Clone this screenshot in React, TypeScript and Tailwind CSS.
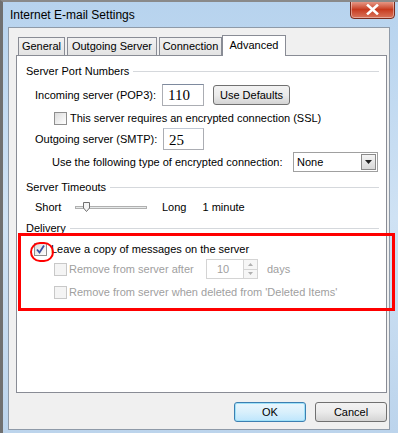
import React from "react";

const font = { fontFamily: '"Liberation Sans", Arial, sans-serif' };

function Check({ checked = false, disabled = false }: { checked?: boolean; disabled?: boolean }) {
  return (
    <span
      className={`flex h-[13px] w-[13px] shrink-0 items-center justify-center border ${
        disabled ? "border-[#c8c8c8] bg-[#f4f4f4]" : "border-[#8f8f8f] bg-gradient-to-br from-[#dcdcdc] to-white"
      }`}
    >
      {checked && (
        <svg width="11" height="11" viewBox="0 0 11 11">
          <path d="M2 5.5 L4.5 8.5 L9 1.5" fill="none" stroke="#3b4fa0" strokeWidth="1.8" />
        </svg>
      )}
    </span>
  );
}

function Heading({ text, mt }: { text: string; mt: string }) {
  return (
    <div className={`flex h-[18px] items-center pl-[9px] pr-[7px] ${mt}`}>
      <span className="whitespace-nowrap pr-[4px]">{text}</span>
      <div className="h-px flex-1 bg-[#d5d8dc]" />
    </div>
  );
}

export default function App() {
  return (
    <div
      className="relative h-[433px] w-[398px] overflow-hidden border-l-[3px] border-t-2 border-l-[#707070] border-t-[#8a8a8a] bg-gradient-to-b from-[#b7d3ee] via-[#cfe2f4] to-[#bcd4ec] text-[11px] text-black"
      style={font}
    >
      {/* title bar */}
      <div className="flex h-[25px] items-start justify-between pl-[7px] pr-[3px]">
        <span className="mt-[4px] text-[12px]">Internet E-mail Settings</span>
        <div className="-mt-[2px] flex h-[19px] w-[45px] items-center justify-center rounded-b-[4px] border border-[#7a2a1c] bg-gradient-to-b from-[#e8a190] via-[#c73a1e] to-[#d9735a] shadow-[inset_0_0_0_1px_rgba(255,255,255,0.4)]">
          <svg width="13" height="11" viewBox="0 0 13 11">
            <path d="M2 1.5 L11 9.5 M11 1.5 L2 9.5" stroke="white" strokeWidth="2.6" strokeLinecap="square" />
          </svg>
        </div>
      </div>

      {/* client area */}
      <div className="ml-[5px] flex h-[403px] w-[382px] flex-col border border-[#8e9aa8] bg-[#f0f0f0]">
        {/* tabs */}
        <div className="mt-[8px] flex h-[19px] items-end pl-[9px]">
          <div className="flex h-[18px] w-[47px] items-center justify-center border border-b-0 border-[#898c95] bg-gradient-to-b from-[#f2f2f2] to-[#e3e3e3]">General</div>
          <div className="ml-[2px] flex h-[18px] w-[90px] items-center justify-center border border-b-0 border-[#898c95] bg-gradient-to-b from-[#f2f2f2] to-[#e3e3e3]">Outgoing Server</div>
          <div className="ml-[2px] flex h-[18px] w-[63px] items-center justify-center border border-b-0 border-[#898c95] bg-gradient-to-b from-[#f2f2f2] to-[#e3e3e3]">Connection</div>
          <div className="relative -mb-px flex h-[21px] w-[64px] items-center justify-center border border-b-0 border-[#898c95] bg-white pb-[2px]">Advanced</div>
        </div>

        {/* tab panel */}
        <div className="ml-[7px] flex h-[338px] w-[371px] flex-col border border-[#898c95] bg-white pt-[6px]">
          <Heading text="Server Port Numbers" mt="mt-0" />

          <div className="mt-[4px] flex h-[22px] items-center pl-[18px]">
            <span className="w-[127px] whitespace-nowrap">Incoming server (POP3):</span>
            <div className="flex h-[22px] w-[42px] items-center border border-[#abadb3] border-t-[#7e8a9e] bg-white pl-[5px] text-[15px]" style={{ fontFamily: '"Liberation Serif", serif' }}>110</div>
            <button className="ml-[9px] h-[20px] w-[77px] rounded-[3px] border border-[#707070] bg-gradient-to-b from-[#f2f2f2] via-[#ebebeb] to-[#d4d4d4] text-[11px]">Use Defaults</button>
          </div>

          <div className="mt-[4px] flex h-[16px] items-center pl-[37px]">
            <Check />
            <span className="ml-[3px] whitespace-nowrap">This server requires an encrypted connection (SSL)</span>
          </div>

          <div className="mt-[2px] flex h-[22px] items-center pl-[18px]">
            <span className="w-[128px] whitespace-nowrap">Outgoing server (SMTP):</span>
            <div className="flex h-[22px] w-[41px] items-center border border-[#abadb3] border-t-[#c0c8d4] bg-white pl-[5px] pt-[3px] text-[15px]" style={{ fontFamily: '"Liberation Serif", serif' }}>25</div>
          </div>

          <div className="mt-[2px] flex h-[20px] items-center pl-[35px]">
            <span className="w-[241px] whitespace-nowrap">Use the following type of encrypted connection:</span>
            <div className="flex h-[20px] w-[85px] items-center justify-between border border-[#a0a0a0] bg-white pl-[3px] pr-px">
              <span>None</span>
              <div className="flex h-[16px] w-[15px] items-center justify-center border border-[#8a8a8a] bg-gradient-to-b from-[#f4f4f4] to-[#d8d8d8]">
                <svg width="7" height="4" viewBox="0 0 7 4"><path d="M0 0 H7 L3.5 4 Z" fill="#222" /></svg>
              </div>
            </div>
          </div>

          <Heading text="Server Timeouts" mt="mt-[6px]" />

          <div className="mt-[2px] flex h-[18px] items-center pl-[18px]">
            <span className="w-[40px]">Short</span>
            <div className="relative flex h-[10px] w-[72px] items-center">
              <div className="h-[3px] w-full border border-[#b0b0b0] bg-[#e7eaea]" />
              <svg className="absolute left-[8px] top-0" width="7" height="10" viewBox="0 0 7 10">
                <path d="M0.5 0.5 H6.5 V6 L3.5 9.5 L0.5 6 Z" fill="#f5f5f5" stroke="#707070" />
              </svg>
            </div>
            <span className="ml-[15px]">Long</span>
            <span className="ml-[16px]">1 minute</span>
          </div>

          <Heading text="Delivery" mt="mt-[3px]" />

          <div className="mt-[3px] flex h-[18px] items-center pl-[17px]">
            <Check checked />
            <span className="ml-[4px] whitespace-nowrap">Leave a copy of messages on the server</span>
          </div>

          <div className="mt-px flex h-[20px] items-center pl-[37px] text-[#a0a0a0]">
            <Check disabled />
            <span className="ml-[2px] w-[137px] whitespace-nowrap">Remove from server after</span>
            <div className="flex h-[20px] w-[52px] items-center border border-[#d4d4d4] bg-white">
              <span className="flex-1 pl-[10px]">10</span>
              <div className="flex h-full w-[14px] flex-col border-l border-[#d4d4d4]">
                <div className="flex flex-1 items-center justify-center border-b border-[#d4d4d4] bg-[#f6f6f6]">
                  <svg width="5" height="3" viewBox="0 0 5 3"><path d="M0 3 H5 L2.5 0 Z" fill="#b0b0b0" /></svg>
                </div>
                <div className="flex flex-1 items-center justify-center bg-[#f6f6f6]">
                  <svg width="5" height="3" viewBox="0 0 5 3"><path d="M0 0 H5 L2.5 3 Z" fill="#b0b0b0" /></svg>
                </div>
              </div>
            </div>
            <span className="ml-[9px]">days</span>
          </div>

          <div className="mt-[4px] flex h-[18px] items-center pl-[37px] text-[#a0a0a0]">
            <Check disabled />
            <span className="ml-[2px] whitespace-nowrap">Remove from server when deleted from 'Deleted Items'</span>
          </div>
        </div>

        {/* buttons */}
        <div className="mt-[9px] flex justify-end gap-[9px] pr-[2px]">
          <button className="h-[20px] w-[72px] rounded-[3px] border border-[#3c7fb1] bg-gradient-to-b from-[#eaf6fd] via-[#d9f0fc] to-[#bee6fd] shadow-[inset_0_0_0_1px_#9fe1f8]">OK</button>
          <button className="h-[20px] w-[72px] rounded-[3px] border border-[#707070] bg-gradient-to-b from-[#f2f2f2] via-[#ebebeb] to-[#d4d4d4]">Cancel</button>
        </div>
      </div>

      {/* highlight overlay */}
      <div className="pointer-events-none absolute left-[15px] top-[231px] h-[78px] w-[377px] border-[3px] border-[#ff0000]" />
      <div className="pointer-events-none absolute left-[27px] top-[240px] h-[20px] w-[24px] rounded-full border-[2.5px] border-[#ff0000]" />
    </div>
  );
}
